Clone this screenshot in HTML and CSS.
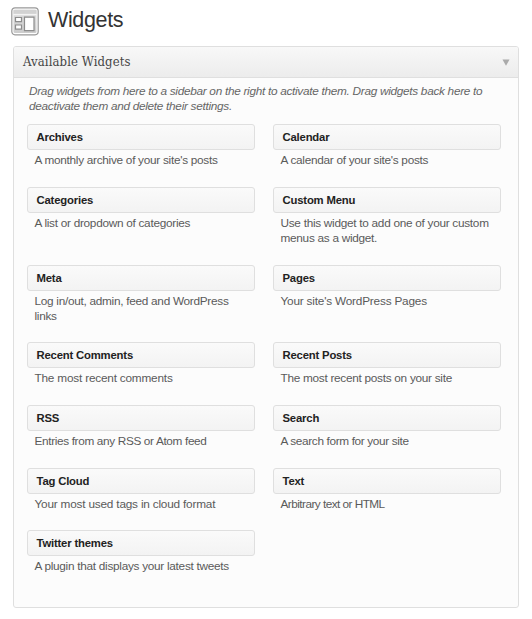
FILE: index.html
```html
<!DOCTYPE html>
<html lang="en">
<head>
<meta charset="utf-8">
<title>Widgets</title>
<link rel="stylesheet" href="styles.css">
</head>
<body>
<header class="page-head">
  <svg class="page-icon" width="28" height="29" viewBox="0 0 28 29">
    <defs><linearGradient id="g" x1="0" y1="0" x2="0" y2="1"><stop offset="0" stop-color="#ddd"/><stop offset="1" stop-color="#ccc"/></linearGradient></defs>
    <rect x=".8" y=".8" width="26.4" height="27" rx="3.2" fill="#fff" stroke="#999" stroke-width="1.2"/>
    <rect x="2.5" y="2.5" width="23" height="23.6" rx="1.5" fill="url(#g)"/>
    <rect x="2.5" y="3" width="23" height="3.8" fill="#d2d2d2"/>
    <path d="M2.5 7.6h23" stroke="#f4f4f4" stroke-width="1.4"/>
    <path d="M4.5 10.5h6v4.2h-6zM4.5 18h6v4.2h-6zM13.5 10.2h9.5V23.6h-9.5z" fill="#fff" stroke="#8c8c8c" stroke-width="1.2"/>
  </svg>
  <h1 class="page-title">Widgets</h1>
</header>
<section class="panel">
  <div class="panel-head"><h2 class="panel-title">Available Widgets</h2>
    <svg class="toggle" width="8" height="7" viewBox="0 0 8 7"><path d="M.5.5h7L4 6.7z" fill="#aaa"/></svg>
  </div>
  <p class="intro">Drag widgets from here to a sidebar on the right to activate them. Drag widgets back here to<br>deactivate them and delete their settings.</p>
  <div class="widgets">
    <article><h3>Archives</h3><p>A monthly archive of your site's posts</p></article>
    <article><h3>Calendar</h3><p>A calendar of your site's posts</p></article>
    <article><h3>Categories</h3><p>A list or dropdown of categories</p></article>
    <article><h3>Custom Menu</h3><p>Use this widget to add one of your custom<br>menus as a widget.</p></article>
    <article><h3>Meta</h3><p>Log in/out, admin, feed and WordPress<br>links</p></article>
    <article class="loose"><h3>Pages</h3><p>Your site's WordPress Pages</p></article>
    <article class="loose"><h3>Recent Comments</h3><p>The most recent comments</p></article>
    <article><h3>Recent Posts</h3><p>The most recent posts on your site</p></article>
    <article class="snug"><h3>RSS</h3><p>Entries from any RSS or Atom feed</p></article>
    <article class="snug"><h3>Search</h3><p>A search form for your site</p></article>
    <article class="loose"><h3>Tag Cloud</h3><p>Your most used tags in cloud format</p></article>
    <article class="tight"><h3>Text</h3><p>Arbitrary text or HTML</p></article>
    <article><h3>Twitter themes</h3><p>A plugin that displays your latest tweets</p></article>
  </div>
</section>
</body>
</html>
```
FILE: styles.css
```css
* { box-sizing: border-box; margin: 0; padding: 0; }
body { background: #fff; font-family: "Liberation Sans", Arial, sans-serif; color: #555; }
.page-head { display: flex; height: 46px; padding: 7px 0 0 11px; }
.page-icon { flex: none; }
.page-title { margin-left: 9px; font-size: 21.5px; line-height: 27px; letter-spacing: -.35px; font-weight: 400; color: #333; }
.panel { width: 506px; height: 562px; margin-left: 13px; border: 1px solid #dfdfdf; border-radius: 3px; background: #fcfcfc; }
.panel-head { display: flex; align-items: center; justify-content: space-between; height: 31px; padding: 0 8px 0 9px; border-bottom: 1px solid #dfdfdf; border-radius: 2px 2px 0 0; background: linear-gradient(#f8f8f8, #ececec); }
.panel-title { font: 400 13px/32px "DejaVu Serif Condensed", "DejaVu Serif", serif; letter-spacing: .1px; color: #464646; }
.toggle { flex: none; margin-top: 1px; }
.intro { padding: 6px 0 0 15px; height: 46px; font-size: 11.8px; line-height: 14.6px; letter-spacing: -.29px; font-style: italic; white-space: nowrap; color: #666; }
.widgets { display: grid; grid-template-columns: 228px 228px; grid-template-rows: 63px 78px 77px 63px 63px 62px 62px; column-gap: 18px; padding-left: 13px; }
.widgets h3 { height: 26px; padding-left: 8.5px; border: 1px solid #dfdfdf; border-radius: 3px; background: linear-gradient(#fafafa, #f3f3f3); font-size: 11.3px; line-height: 24px; letter-spacing: -.18px; color: #222; }
.widgets p { padding: 3px 0 0 7.5px; font-size: 11.8px; line-height: 14.6px; letter-spacing: -.28px; white-space: nowrap; color: #5a5a5a; }
.widgets .loose p { letter-spacing: -.2px; }
.widgets .snug p { letter-spacing: -.35px; }
.widgets .tight p { letter-spacing: -.54px; }
```
